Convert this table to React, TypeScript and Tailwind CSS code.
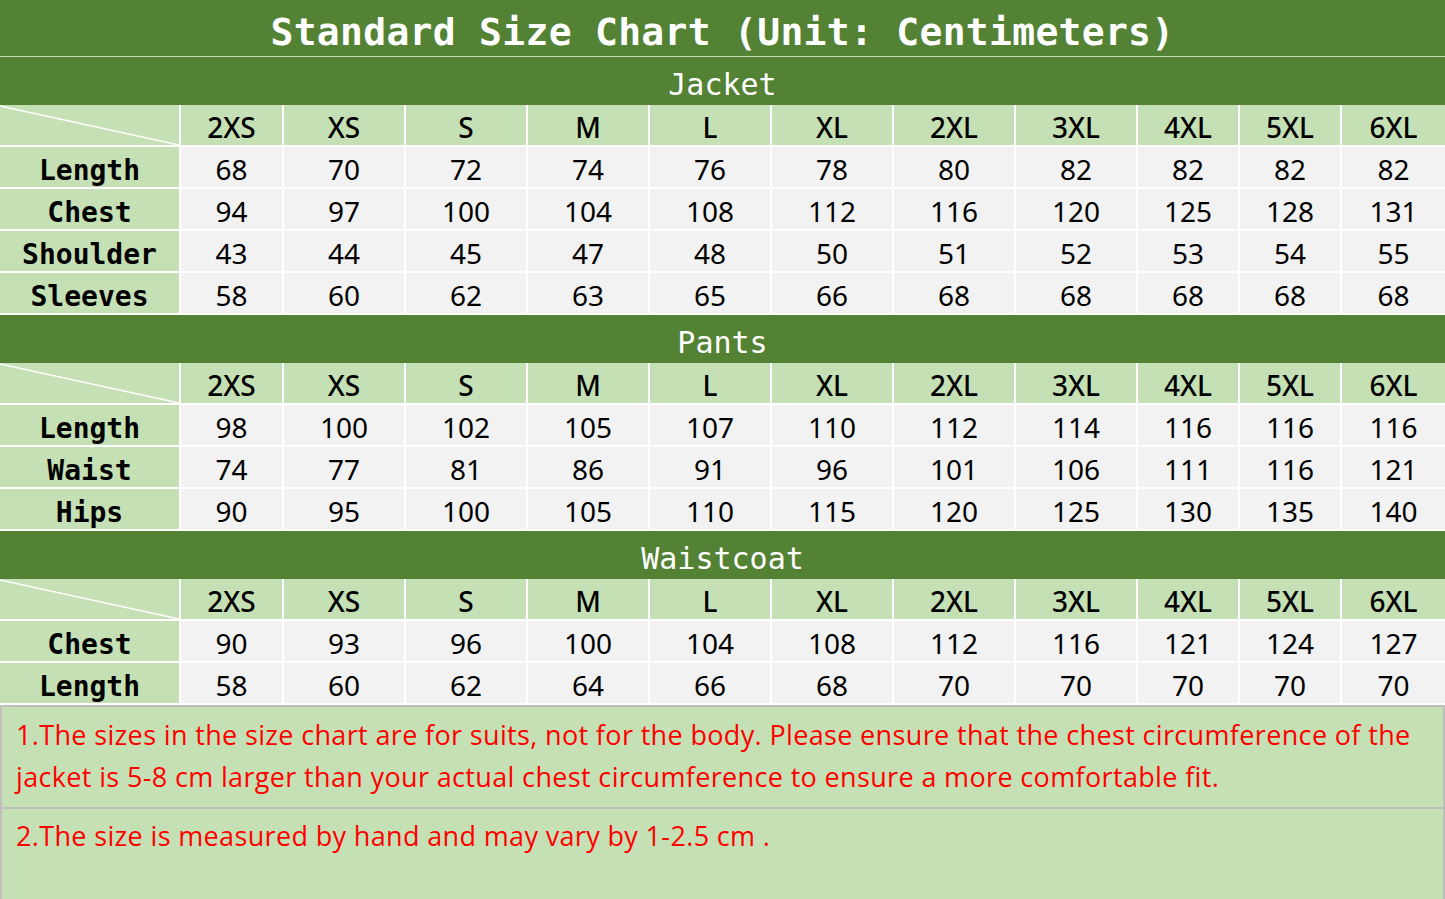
import React from "react";

const sizes = ["2XS", "XS", "S", "M", "L", "XL", "2XL", "3XL", "4XL", "5XL", "6XL"];

type Section = { name: string; rows: { label: string; values: number[] }[] };

const sections: Section[] = [
  {
    name: "Jacket",
    rows: [
      { label: "Length", values: [68, 70, 72, 74, 76, 78, 80, 82, 82, 82, 82] },
      { label: "Chest", values: [94, 97, 100, 104, 108, 112, 116, 120, 125, 128, 131] },
      { label: "Shoulder", values: [43, 44, 45, 47, 48, 50, 51, 52, 53, 54, 55] },
      { label: "Sleeves", values: [58, 60, 62, 63, 65, 66, 68, 68, 68, 68, 68] },
    ],
  },
  {
    name: "Pants",
    rows: [
      { label: "Length", values: [98, 100, 102, 105, 107, 110, 112, 114, 116, 116, 116] },
      { label: "Waist", values: [74, 77, 81, 86, 91, 96, 101, 106, 111, 116, 121] },
      { label: "Hips", values: [90, 95, 100, 105, 110, 115, 120, 125, 130, 135, 140] },
    ],
  },
  {
    name: "Waistcoat",
    rows: [
      { label: "Chest", values: [90, 93, 96, 100, 104, 108, 112, 116, 121, 124, 127] },
      { label: "Length", values: [58, 60, 62, 64, 66, 68, 70, 70, 70, 70, 70] },
    ],
  },
];

const gridCols =
  "grid grid-cols-[181px_103px_122px_122px_122px_122px_122px_122px_122px_102px_102px_103px]";

function SectionBlock({ section }: { section: Section }) {
  return (
    <div className="flex flex-col">
      <div className="h-[48px] bg-[#548235] text-white text-[30px] flex items-center justify-center pt-[6px] font-['DejaVu_Sans_Mono',monospace]">
        {section.name}
      </div>
      <div className={gridCols}>
        <div className="relative h-[42px] bg-[#C5E0B4] border-r-2 border-b-2 border-white">
          <svg className="absolute inset-0 w-full h-full" viewBox="0 0 179 40" preserveAspectRatio="none">
            <line x1="0" y1="1" x2="179" y2="40" stroke="white" strokeWidth="1.5" />
          </svg>
        </div>
        {sizes.map((s, i) => (
          <div
            key={s}
            className={
              i === sizes.length - 1
                ? "h-[42px] bg-[#C5E0B4] border-b-2 border-white flex items-center justify-center pt-[4px] text-[28px] font-medium text-black font-['Noto_Sans',sans-serif]"
                : "h-[42px] bg-[#C5E0B4] border-r-2 border-b-2 border-white flex items-center justify-center pt-[4px] text-[28px] font-medium text-black font-['Noto_Sans',sans-serif]"
            }
          >
            {s}
          </div>
        ))}
        {section.rows.map((row) => (
          <React.Fragment key={row.label}>
            <div className="h-[42px] bg-[#C5E0B4] border-r-2 border-b-2 border-white flex items-center justify-center pt-[8px] text-[28px] font-bold text-black font-['DejaVu_Sans_Mono',monospace]">
              {row.label}
            </div>
            {row.values.map((v, i) => (
              <div
                key={i}
                className={
                  i === row.values.length - 1
                    ? "h-[42px] bg-[#F2F2F2] border-b-2 border-white flex items-center justify-center pt-[4px] text-[28px] text-black font-['Noto_Sans',sans-serif]"
                    : "h-[42px] bg-[#F2F2F2] border-r-2 border-b-2 border-white flex items-center justify-center pt-[4px] text-[28px] text-black font-['Noto_Sans',sans-serif]"
                }
              >
                {v}
              </div>
            ))}
          </React.Fragment>
        ))}
      </div>
    </div>
  );
}

export default function App() {
  return (
    <div className="w-[1445px] h-[899px] bg-white overflow-hidden flex flex-col">
      <div className="h-[57px] bg-[#548235] border-b border-[#c8d8bc] text-white text-[38px] font-bold flex items-center justify-center pt-[8px] tracking-[0.3px] font-['DejaVu_Sans_Mono',monospace]">
        Standard Size Chart (Unit: Centimeters)
      </div>
      {sections.map((s) => (
        <SectionBlock key={s.name} section={s} />
      ))}
      <div className="flex-1 flex flex-col bg-[#C5E0B4] border-l-2 border-r-2 border-[#bfbfbf]">
        <div className="h-[104px] border-t-2 border-b-2 border-[#bfbfbf] px-[14px] pt-[7px] text-[27px] leading-[42px] tracking-[0.35px] whitespace-nowrap text-[#ff0000] font-['Open_Sans',sans-serif]">
          1.The sizes in the size chart are for suits, not for the body. Please ensure that the chest circumference of the
          <br />
          jacket is 5-8 cm larger than your actual chest circumference to ensure a more comfortable fit.
        </div>
        <div className="flex-1 px-[14px] pt-[6px] text-[27px] leading-[42px] tracking-[0.35px] whitespace-nowrap text-[#ff0000] font-['Open_Sans',sans-serif]">
          2.The size is measured by hand and may vary by 1-2.5 cm .
        </div>
      </div>
    </div>
  );
}
